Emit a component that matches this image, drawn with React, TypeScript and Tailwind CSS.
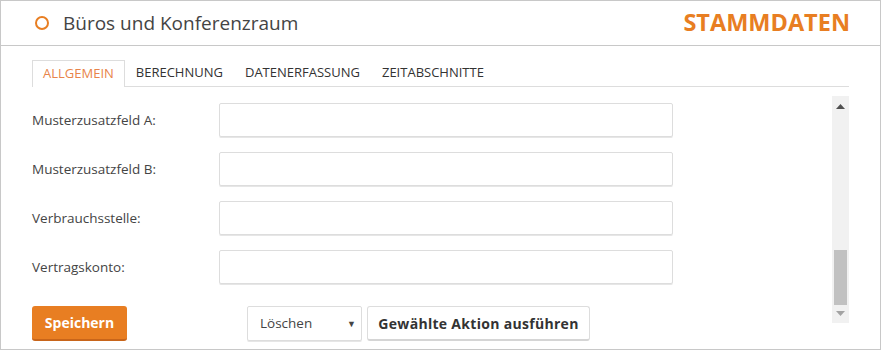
const fields = ['Musterzusatzfeld A:', 'Musterzusatzfeld B:', 'Verbrauchsstelle:', 'Vertragskonto:'];
const tabs = ['ALLGEMEIN', 'BERECHNUNG', 'DATENERFASSUNG', 'ZEITABSCHNITTE'];

export default function App() {
  return (
    <div className="h-[350px] w-[883px] bg-white font-['Open_Sans',sans-serif] text-[#444]">
      <div className="flex h-[350px] w-[881px] flex-col overflow-hidden border border-[#c8c8c8]">
        {/* Header */}
        <header className="flex h-[45px] shrink-0 items-center border-b border-[#c8c8c8] pl-[34px] pr-[30px]">
          <span className="h-[14px] w-[14px] rounded-full border-2 border-[#e87e22]" />
          <h1 className="ml-[14px] text-[19px] text-[#444]">Büros und Konferenzraum</h1>
          <div className="ml-auto text-[23.5px] font-bold leading-none text-[#e87e22]">STAMMDATEN</div>
        </header>

        {/* Tabs */}
        <nav className="mx-[31px] mt-[14px] flex h-[27px] border-b border-[#ddd] text-[13px]">
          {tabs.map((t, i) => (
            <div
              key={t}
              className={
                i === 0
                  ? '-mb-px flex h-[27px] items-center border border-b-0 border-[#ddd] bg-white px-[10px] text-[#e8844a]'
                  : 'flex h-[26px] items-center px-[11px] text-[#333]'
              }
            >
              {t}
            </div>
          ))}
        </nav>

        {/* Body */}
        <div className="mx-[31px] flex">
          <div className="flex flex-1 flex-col pt-[16px]">
            <div className="flex flex-col gap-[15px]">
              {fields.map((f) => (
                <div key={f} className="flex h-[34px] items-center">
                  <label className="w-[187px] text-[13.5px] text-[#444]">{f}</label>
                  <input
                    type="text"
                    className="h-[34px] w-[454px] rounded-[2px] border border-[#ddd] shadow-[0_1px_0_#e6e6e6] outline-none"
                  />
                </div>
              ))}
            </div>

            {/* Actions */}
            <div className="mt-[22px] flex items-center">
              <button className="h-[35px] w-[95px] rounded-[3px] border-b-2 border-[#c8651a] bg-[#e87e22] text-[14px] font-bold text-white">
                Speichern
              </button>
              <div className="ml-[120px] flex h-[35px] w-[115px] items-center justify-between rounded-[2px] border border-[#ddd] pl-[12px] pr-[5px] text-[13.5px] text-[#444] shadow-[0_1px_0_#e6e6e6]">
                Löschen
                <span className="text-[9px] text-[#444]">▼</span>
              </div>
              <button className="ml-[5px] h-[35px] w-[223px] rounded-[3px] border border-[#ddd] border-b-2 border-b-[#d5d5d5] bg-white text-[14px] font-bold tracking-[0.3px] text-[#333]">
                Gewählte Aktion ausführen
              </button>
            </div>
          </div>

          {/* Scrollbar */}
          <div className="mt-[9px] flex h-[227px] w-[17px] flex-col items-center bg-[#f1f1f1]">
            <svg width="9" height="5" viewBox="0 0 9 5" className="mt-[8px]">
              <path d="M0 5 L4.5 0 L9 5 Z" fill="#505050" />
            </svg>
            <div className="mt-auto h-[55px] w-[13px] bg-[#c1c1c1]" />
            <svg width="9" height="5" viewBox="0 0 9 5" className="mb-[7px] mt-[6px]">
              <path d="M0 0 L4.5 5 L9 0 Z" fill="#a3a3a3" />
            </svg>
          </div>
        </div>
      </div>
    </div>
  );
}
